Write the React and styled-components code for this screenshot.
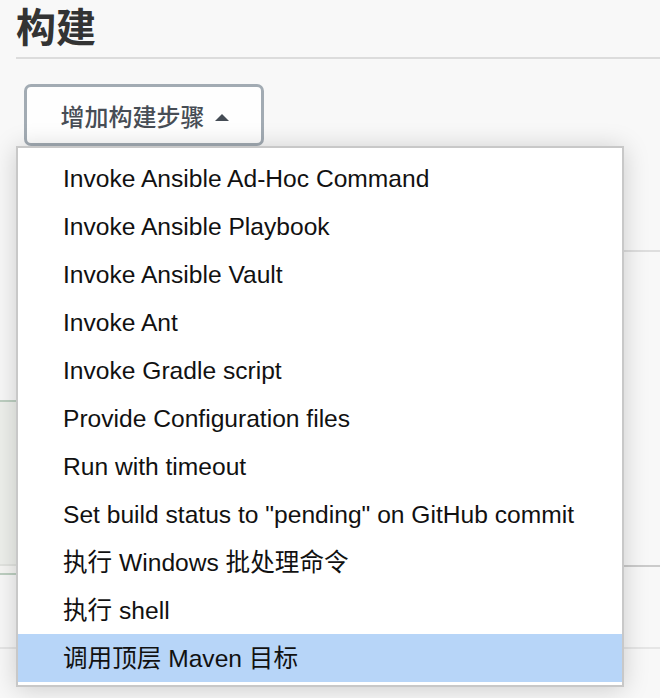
import styled, { createGlobalStyle } from "styled-components";

const GlobalStyle = createGlobalStyle`
  html, body {
    margin: 0;
    padding: 0;
    background: #f8f8f8;
  }
  body {
    font-family: "Liberation Sans", "Noto Sans CJK SC", sans-serif;
    color: #111;
  }
`;

const Page = styled.div`
  height: 698px;
  overflow: hidden;
  padding: 0 0 0 16px;
  box-sizing: border-box;
`;

const SectionTitle = styled.h2`
  margin: 1px 0 0;
  font-family: "Noto Sans CJK SC", sans-serif;
  font-size: 40px;
  line-height: 48px;
  font-weight: 700;
  color: #333;
`;

const Rule = styled.div`
  margin-top: 8px;
  border-top: 2px solid #dcdcdc;
`;

const ButtonWrap = styled.div`
  position: relative;
  margin: 25px 0 0 8px;
  width: 240px;
  z-index: 2;
`;

const AddButton = styled.button`
  box-sizing: border-box;
  width: 240px;
  height: 62px;
  display: flex;
  align-items: center;
  justify-content: center;
  gap: 10px;
  background: #fefefe;
  border: 3px solid #a2abb3;
  border-radius: 7px;
  font-family: "Noto Sans CJK SC", sans-serif;
  font-size: 24px;
  font-weight: 500;
  color: #474d55;
  padding: 0 0 0 1px;
`;

const Caret = styled.span`
  width: 0;
  height: 0;
  margin-top: 4px;
  border-left: 7.5px solid transparent;
  border-right: 7.5px solid transparent;
  border-bottom: 7px solid #454c55;
`;

const Menu = styled.ul`
  position: absolute;
  top: 100%;
  left: -8px;
  box-sizing: border-box;
  width: 608px;
  margin: 0;
  padding: 6px 0 3px;
  list-style: none;
  background: #fff;
  border: 2px solid #c8c8c8;
  box-shadow: 0 2px 24px rgba(0, 0, 0, 0.18);
`;

const MenuItem = styled.li`
  height: 48px;
  line-height: 50px;
  padding-left: 45px;
  font-size: 24.6px;
  white-space: nowrap;
  color: #111;
  background: ${p => (p.$active ? "#b7d5f8" : "transparent")};
`;

const Backdrop = styled.div`
  margin-top: 104px;
`;

const Divider = styled.div`
  border-top: 2px solid ${p => p.$color || "#dedede"};
  margin-left: ${p => p.$bleed || 0}px;
`;

const Gap = styled.div`
  height: ${p => p.$h}px;
`;

const StepRow = styled.div`
  display: grid;
  grid-template-columns: 300px 1fr;
  margin-left: -16px;
`;

const StepPanel = styled.div`
  height: 171px;
  background: #eef0ec;
  border-top: 2px solid #bdcfc1;
  border-bottom: 2px solid #bdcfc1;
  display: flex;
  flex-direction: column;
  justify-content: flex-end;
`;

const PanelFoot = styled.div`
  height: 7px;
  border-top: 2px solid #e2e4e0;
  background: #f6f6f4;
`;

const SideBlock = styled.div`
  height: 165px;
  border-bottom: 2px solid #cbcbcb;
`;

const items = [
  "Invoke Ansible Ad-Hoc Command",
  "Invoke Ansible Playbook",
  "Invoke Ansible Vault",
  "Invoke Ant",
  "Invoke Gradle script",
  "Provide Configuration files",
  "Run with timeout",
  'Set build status to "pending" on GitHub commit',
  "执行 Windows 批处理命令",
  "执行 shell",
  "调用顶层 Maven 目标",
];

const App = () => {
  return (
    <>
      <GlobalStyle />
      <Page>
        <SectionTitle>构建</SectionTitle>
        <Rule />
        <ButtonWrap>
          <AddButton>
            增加构建步骤
            <Caret />
          </AddButton>
          <Menu>
            {items.map((item, i) => (
              <MenuItem key={item} $active={i === items.length - 1}>
                {item}
              </MenuItem>
            ))}
          </Menu>
        </ButtonWrap>
        <Backdrop>
          <Divider />
          <Gap $h={148} />
          <StepRow>
            <StepPanel>
              <PanelFoot />
            </StepPanel>
            <SideBlock />
          </StepRow>
          <Gap $h={72} />
          <Divider $color="#e6e6e6" $bleed={-16} />
        </Backdrop>
      </Page>
    </>
  );
};

export default App;
